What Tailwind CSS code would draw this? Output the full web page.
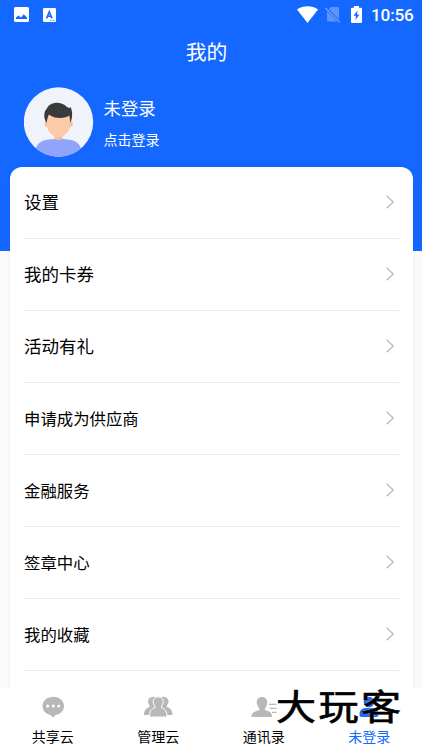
<!DOCTYPE html>
<html lang="zh-CN">
<head>
<meta charset="utf-8">
<meta name="viewport" content="width=device-width, initial-scale=1">
<title>我的</title>
<script src="https://cdn.jsdelivr.net/npm/@tailwindcss/browser@4"></script>
</head>
<body class="font-['Noto_Sans_CJK_SC',sans-serif] bg-[#fafafa] text-black">
<div class="relative flex h-[750px] w-[422px] flex-col overflow-hidden">
  <!-- Header -->
  <header class="flex h-[251px] shrink-0 flex-col bg-[#1467ff] text-white">
    <div class="flex h-[29px] items-center pl-[14px] pr-[9px]">
      <svg class="h-[15px] w-[15px]" viewBox="0 0 15 15"><rect width="15" height="15" rx="1.5" fill="#fff"/><path d="M2 12V10.500L4.500 8.600 7 10.600 9.700 7.200 13 10.500V12Z" fill="#1467ff"/></svg>
      <svg class="ml-[14px] h-[14px] w-[13px]" viewBox="0 0 13 14"><rect width="13" height="14" rx="1.2" fill="#fff"/><path d="M3.6 10.4 6.3 3.8 9 10.4M4.6 8.3H8" fill="none" stroke="#1467ff" stroke-width="1.6"/><path d="M7 12.4H12" stroke="#1467ff" stroke-width=".7" stroke-dasharray="1 .5"/></svg>
      <div class="flex-1"></div>
      <svg class="h-[17px] w-[21px]" viewBox="0 0 21 17"><path d="M0 3.6C6-.8 15-.8 21 3.6L10.5 17Z" fill="#fff"/></svg>
      <svg class="ml-[7px] h-[17px] w-[16px]" viewBox="0 0 16 17"><path d="M6 1H12.5Q14 1 14 2.500V15.500H3.500Q2 15.500 2 14V5Z" fill="#5c95ff"/><path d="M0 1 15 16.500" stroke="#1467ff" stroke-width="3"/><path d="M.5 2 14.800 16.500" stroke="#6fa1ff" stroke-width="1.300"/></svg>
      <svg class="ml-[10px] h-[17px] w-[11px]" viewBox="0 0 11 17"><path d="M3 0H8V1.700H10Q11 1.700 11 2.700V16Q11 17 10 17H1Q0 17 0 16V2.700Q0 1.700 1 1.700H3Z" fill="#fff"/><path d="M6.500 4.500 2.500 9.700H5L4.500 14 8.500 8.500H6Z" fill="#1467ff"/></svg>
      <span class="ml-[9px] w-[42px] whitespace-nowrap font-[Roboto] text-[17.2px] font-medium leading-[20px] tracking-[-0.2px]">10:56</span>
    </div>
    <h1 class="h-[46px] pr-[9px] text-center text-[20.8px] leading-[45px]">我的</h1>
    <div class="flex pl-[23.500px] pt-[12px]">
      <svg class="h-[70px] w-[70px]" viewBox="0 0 70 70">
        <defs><clipPath id="avatar"><circle cx="34.500" cy="35" r="34.700"/></clipPath></defs>
        <circle cx="34.500" cy="35" r="34.700" fill="#f0f3fa"/>
        <g clip-path="url(#avatar)">
          <path d="M11.500 63C13 54 21 52.500 30 52H38C49 52.500 55 54 57.500 63V71H11.500Z" fill="#91a4fc"/>
          <path d="M30.500 43H38.500V52Q34.500 54.500 30.500 52Z" fill="#f5bd98"/>
          <ellipse cx="22.500" cy="37" rx="2" ry="2.800" fill="#f8c4a0"/><ellipse cx="46.800" cy="37" rx="2" ry="2.800" fill="#f8c4a0"/>
          <path d="M22.500 26H46.500V37C46.500 44 40 50.300 34.500 50.300S22.500 44 22.500 37Z" fill="#fbcaa8"/>
          <path d="M22.500 36C19.500 31 19.500 25 22.800 21.500C26 15 36 13.500 42.500 19.500C44 21 46.500 21.500 46.300 19.700C49 24 48.500 31 46.500 36L45.300 28.500C41 32 30 32 25 27.500Q23.500 30 22.500 36Z" fill="#3a3a3b"/>
        </g>
      </svg>
      <div class="flex flex-col pl-[10px] pt-[8px]">
        <span class="text-[17.400px] leading-[26px]">未登录</span>
        <span class="mt-[8px] text-[14px] leading-[20px]">点击登录</span>
      </div>
    </div>
  </header>

  <!-- Menu -->
  <main class="relative -mt-[84px] ml-[10px] h-[521px] w-[403px] shrink-0 overflow-hidden rounded-t-[12px] bg-white px-[14px] shadow-[0_0_5px_rgba(0,0,0,0.05)]">
    <div class="flex h-[72px] items-center justify-between border-b border-[#e9e9e9] pr-[4px] pb-px text-[17.500px]"><span class="pt-px">设置</span><svg class="h-[14px] w-[9px]" viewBox="0 0 9 14"><path d="M.5 .7 7.300 7 .5 13.300" fill="none" stroke="#b8b8b8" stroke-width="1.200"/></svg></div>
    <div class="flex h-[72px] items-center justify-between border-b border-[#e9e9e9] pr-[4px] pb-px text-[17.500px]"><span class="pt-px">我的卡券</span><svg class="h-[14px] w-[9px]" viewBox="0 0 9 14"><path d="M.5 .7 7.300 7 .5 13.300" fill="none" stroke="#b8b8b8" stroke-width="1.200"/></svg></div>
    <div class="flex h-[72px] items-center justify-between border-b border-[#e9e9e9] pr-[4px] pb-px text-[17.500px]"><span class="pt-px">活动有礼</span><svg class="h-[14px] w-[9px]" viewBox="0 0 9 14"><path d="M.5 .7 7.300 7 .5 13.300" fill="none" stroke="#b8b8b8" stroke-width="1.200"/></svg></div>
    <div class="flex h-[72px] items-center justify-between border-b border-[#e9e9e9] pr-[4px] pb-px text-[16.400px]"><span class="pt-px">申请成为供应商</span><svg class="h-[14px] w-[9px]" viewBox="0 0 9 14"><path d="M.5 .7 7.300 7 .5 13.300" fill="none" stroke="#b8b8b8" stroke-width="1.200"/></svg></div>
    <div class="flex h-[72px] items-center justify-between border-b border-[#e9e9e9] pr-[4px] pb-px text-[16.400px]"><span class="pt-px">金融服务</span><svg class="h-[14px] w-[9px]" viewBox="0 0 9 14"><path d="M.5 .7 7.300 7 .5 13.300" fill="none" stroke="#b8b8b8" stroke-width="1.200"/></svg></div>
    <div class="flex h-[72px] items-center justify-between border-b border-[#e9e9e9] pr-[4px] pb-px text-[16.400px]"><span class="pt-px">签章中心</span><svg class="h-[14px] w-[9px]" viewBox="0 0 9 14"><path d="M.5 .7 7.300 7 .5 13.300" fill="none" stroke="#b8b8b8" stroke-width="1.200"/></svg></div>
    <div class="flex h-[72px] items-center justify-between border-b border-[#e9e9e9] pr-[4px] pb-px text-[16.400px]"><span class="pt-px">我的收藏</span><svg class="h-[14px] w-[9px]" viewBox="0 0 9 14"><path d="M.5 .7 7.300 7 .5 13.300" fill="none" stroke="#b8b8b8" stroke-width="1.200"/></svg></div>
  </main>

  <!-- Tab bar -->
  <nav class="relative z-10 grid h-[62px] shrink-0 grid-cols-4 bg-white text-center text-[14px] leading-[20px]">
    <div class="flex flex-col items-center pt-[8px]">
      <svg class="h-[22px] w-[30px]" viewBox="0 0 30 22"><path d="M15.300.7C9.300.7 4.500 4.700 4.500 10C4.500 14.800 8 18.200 12.500 19L15 21.500 17.500 19C22.500 18.200 26 14.800 26 10C26 4.700 21.300.7 15.300.7Z" fill="#b8b8b8"/><g fill="#fff"><circle cx="9.700" cy="10" r="1.500"/><circle cx="15.200" cy="10" r="1.500"/><circle cx="20.700" cy="10" r="1.500"/></g></svg>
      <span class="mt-[8px]">共享云</span>
    </div>
    <div class="flex flex-col items-center pt-[8px]">
      <svg class="h-[22px] w-[30px]" viewBox="0 0 30 22"><g id="side" fill="#b8b8b8"><path d="M9 1C12.500.2 14.500 3 13.500 6.500C13 9 11.500 9.700 11.500 11L9 19H1C1 14.500 2.500 12.500 6.500 11C7.500 10 5 8 5 5.500C5 3 6.500 1.200 9 1Z"/></g><use href="#side" transform="matrix(-1 0 0 1 30.500 0)"/><path d="M15.200.8C18.700.8 20.500 3.200 20.200 6.300C20 8.800 18.300 10 18.300 11.500C22.500 13 24 15.500 24 21H6.500C6.500 15.500 8 13 12.200 11.500C12.200 10 10.500 8.800 10.200 6.300C9.900 3.200 11.700.8 15.200.8Z" fill="#b8b8b8" stroke="#fff" stroke-width="1"/></svg>
      <span class="mt-[8px]">管理云</span>
    </div>
    <div class="flex flex-col items-center pt-[8px]">
      <svg class="h-[22px] w-[30px]" viewBox="0 0 30 22"><path d="M13 1C16.500 1 18.500 3.700 18.200 7C18 10 16 11.500 15.800 14C20.500 15.500 23 16 23 21H2.500C2.500 16 6 15.500 10.700 14C10.500 11.500 8 10 7.800 7C7.500 3.700 9.500 1 13 1Z" fill="#b8b8b8"/><path d="M20 8.300H27.500M20.800 12.300H27.500M23 16.300H27.500" stroke="#b8b8b8" stroke-width="1.300"/></svg>
      <span class="mt-[8px]">通讯录</span>
    </div>
    <div class="flex flex-col items-center pt-[8px] text-[#1467ff]">
      <svg class="h-[22px] w-[30px]" viewBox="0 0 30 22"><circle cx="15" cy="6" r="5.300" fill="#1467ff"/><path d="M5.500 18.500C5.500 13.500 8.500 12 13 12H17C21.500 12 24.500 13.500 24.500 18.500Q24.500 21 22 21H8Q5.500 21 5.500 18.500Z" fill="#1467ff"/></svg>
      <span class="mt-[8px]">未登录</span>
    </div>
  </nav>

  <!-- Overlay mark -->
  <div class="absolute left-[276px] top-[686px] z-20 origin-center scale-y-[0.88] whitespace-nowrap text-[40px] leading-[38px] tracking-[2.500px] text-black [-webkit-text-stroke:0.8px_#000] [text-shadow:0_0_2px_#fff]">大玩客</div>
</div>
</body>
</html>
